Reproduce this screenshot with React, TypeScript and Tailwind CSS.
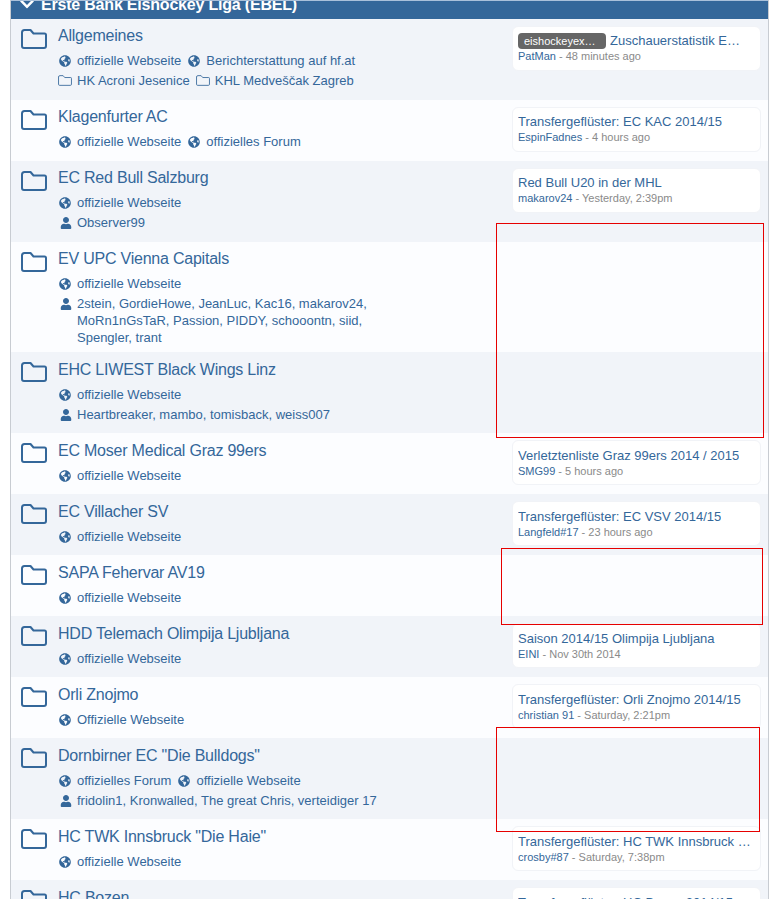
import { FaChevronDown, FaGlobeAmericas, FaUser } from "react-icons/fa";

type Line = { icon: "globe" | "folder" | "user"; label: string }[];

type Forum = {
  title: string;
  lines: Line[];
  tight?: boolean;
  post?: { tag?: string; title: string; author: string; time: string };
};

const web = (label = "offizielle Webseite") => ({ icon: "globe" as const, label });

const FORUMS: Forum[] = [
  {
    title: "Allgemeines",
    lines: [
      [web(), web("Berichterstattung auf hf.at")],
      [
        { icon: "folder", label: "HK Acroni Jesenice" },
        { icon: "folder", label: "KHL Medveščak Zagreb" },
      ],
    ],
    post: { tag: "eishockeyexperte", title: "Zuschauerstatistik EBEL 2014/15", author: "PatMan", time: "48 minutes ago" },
  },
  {
    title: "Klagenfurter AC",
    lines: [[web(), web("offizielles Forum")]],
    post: { title: "Transfergeflüster: EC KAC 2014/15", author: "EspinFadnes", time: "4 hours ago" },
  },
  {
    title: "EC Red Bull Salzburg",
    lines: [[web()], [{ icon: "user", label: "Observer99" }]],
    post: { title: "Red Bull U20 in der MHL", author: "makarov24", time: "Yesterday, 2:39pm" },
  },
  {
    title: "EV UPC Vienna Capitals",
    tight: true,
    lines: [
      [web()],
      [{ icon: "user", label: "2stein, GordieHowe, JeanLuc, Kac16, makarov24, MoRn1nGsTaR, Passion, PIDDY, schooontn, siid, Spengler, trant" }],
    ],
  },
  {
    title: "EHC LIWEST Black Wings Linz",
    lines: [[web()], [{ icon: "user", label: "Heartbreaker, mambo, tomisback, weiss007" }]],
  },
  {
    title: "EC Moser Medical Graz 99ers",
    lines: [[web()]],
    post: { title: "Verletztenliste Graz 99ers 2014 / 2015", author: "SMG99", time: "5 hours ago" },
  },
  {
    title: "EC Villacher SV",
    lines: [[web()]],
    post: { title: "Transfergeflüster: EC VSV 2014/15", author: "Langfeld#17", time: "23 hours ago" },
  },
  { title: "SAPA Fehervar AV19", lines: [[web()]] },
  {
    title: "HDD Telemach Olimpija Ljubljana",
    lines: [[web()]],
    post: { title: "Saison 2014/15 Olimpija Ljubljana", author: "EINI", time: "Nov 30th 2014" },
  },
  {
    title: "Orli Znojmo",
    lines: [[web("Offizielle Webseite")]],
    post: { title: "Transfergeflüster: Orli Znojmo 2014/15", author: "christian 91", time: "Saturday, 2:21pm" },
  },
  {
    title: 'Dornbirner EC "Die Bulldogs"',
    lines: [
      [web("offizielles Forum"), web()],
      [{ icon: "user", label: "fridolin1, Kronwalled, The great Chris, verteidiger 17" }],
    ],
  },
  {
    title: 'HC TWK Innsbruck "Die Haie"',
    lines: [[web()]],
    post: { title: "Transfergeflüster: HC TWK Innsbruck Saison 2014/15", author: "crosby#87", time: "Saturday, 7:38pm" },
  },
  {
    title: "HC Bozen",
    lines: [[web()]],
    post: { title: "Transfergeflüster: HC Bozen 2014/15", author: "Bozen", time: "Saturday, 1:02pm" },
  },
];

const Folder = ({ small }: { small?: boolean }) => (
  <svg
    viewBox="0 0 26 20"
    fill="none"
    stroke="#34679a"
    strokeWidth={small ? 1.6 : 2}
    strokeLinejoin="round"
    className={small ? "-ml-px h-[11px] w-[14px]" : "h-[20px] w-[26px] shrink-0"}
  >
    <path d="M1 3.5Q1 1 3.5 1H9.5L12.5 4.5H23.5Q25 4.5 25 6V17Q25 19 23 19H3Q1 19 1 17Z" />
  </svg>
);

const ItemIcon = ({ icon }: { icon: string }) => (
  <span className="inline-flex h-[17px] w-[19px] shrink-0 items-center pl-px text-[12px] text-[#34679a]">
    {icon === "globe" && <FaGlobeAmericas />}
    {icon === "user" && <FaUser className="ml-[1px] text-[12px]" />}
    {icon === "folder" && <Folder small />}
  </span>
);

const PostCard = ({ post, upper }: { post: NonNullable<Forum["post"]>; upper: boolean }) => (
  <div
    className={`mr-[7px] mt-[7px] h-[45px] w-[249px] shrink-0 rounded-md border border-[#f1f3f7] bg-white pl-[5px] ${
      upper ? "pt-[4px]" : "pt-[5px]"
    } ${post.tag ? "pr-[16px]" : "pr-[5px]"}`}
  >
    <div className="flex h-[19px] items-center gap-1 text-[13px] leading-[19px] text-[#34679a]">
      {post.tag && (
        <span className="h-[16px] w-[88px] shrink-0 truncate rounded bg-[#666666] px-[6px] text-[11px] leading-[16px] text-white">
          {post.tag}
        </span>
      )}
      <span className="truncate">{post.title}</span>
    </div>
    <div className="text-[11px] leading-[13px] text-[#8a8a8a]">
      <span className="text-[#34679a]">{post.author}</span> - {post.time}
    </div>
  </div>
);

// the first four rows sit a pixel higher in the reference than the rest
const ForumRow = ({ forum, index }: { forum: Forum; index: number }) => {
  const upper = index < 4;
  const bottom = forum.tight ? "pb-[6px]" : upper ? "pb-[11px]" : "pb-[10px]";
  return (
    <div className={`flex justify-between pl-[10px] ${index % 2 === 0 ? "bg-[#f1f4f9]" : "bg-[#fcfdff]"}`}>
      <div className="flex gap-[11px] pt-[10px]">
        <Folder />
        <div className={`${upper ? "-mt-[3px]" : "-mt-[2px]"} ${bottom}`}>
          <h3 className="text-[16px] font-normal leading-[20px] tracking-[-0.22px] text-[#34679a]">{forum.title}</h3>
          <div className="mt-[6px] flex flex-col gap-[3px] text-[13px] leading-[17px] text-[#34679a]">
            {forum.lines.map((line, i) => (
              <div key={i} className="flex gap-[6px]">
                {line.map((item) => (
                  <div key={item.label} className="flex max-w-[325px]">
                    <ItemIcon icon={item.icon} />
                    <span>{item.label}</span>
                  </div>
                ))}
              </div>
            ))}
          </div>
        </div>
      </div>
      {forum.post && <PostCard post={forum.post} upper={upper} />}
    </div>
  );
};

const App = () => {
  return (
    <div className="relative h-[899px] w-[769px] overflow-hidden bg-white font-['Liberation_Sans',Arial,sans-serif]">
      <div className="ml-[10px] border-x border-[#c8ccd2]">
        <div className="flex h-[19px] items-end gap-[7px] overflow-hidden border-t border-[#a9c0da] bg-[#34679a] pl-[9px] text-white">
          <FaChevronDown className="mb-[7px] w-[14px] shrink-0 text-[16px]" />
          <h2 className="mb-[5px] whitespace-nowrap text-[16px] font-bold leading-[18px] tracking-[-0.2px]">Erste Bank Eishockey Liga (EBEL)</h2>
        </div>
        {FORUMS.map((forum, i) => (
          <ForumRow key={forum.title} forum={forum} index={i} />
        ))}
      </div>
      <div className="absolute left-[496px] top-[223px] h-[215px] w-[268px] border border-[#e60000]" />
      <div className="absolute left-[501px] top-[548px] h-[77px] w-[262px] border border-[#e60000]" />
      <div className="absolute left-[496px] top-[727px] h-[105px] w-[264px] border border-[#e60000]" />
    </div>
  );
};

export default App;
